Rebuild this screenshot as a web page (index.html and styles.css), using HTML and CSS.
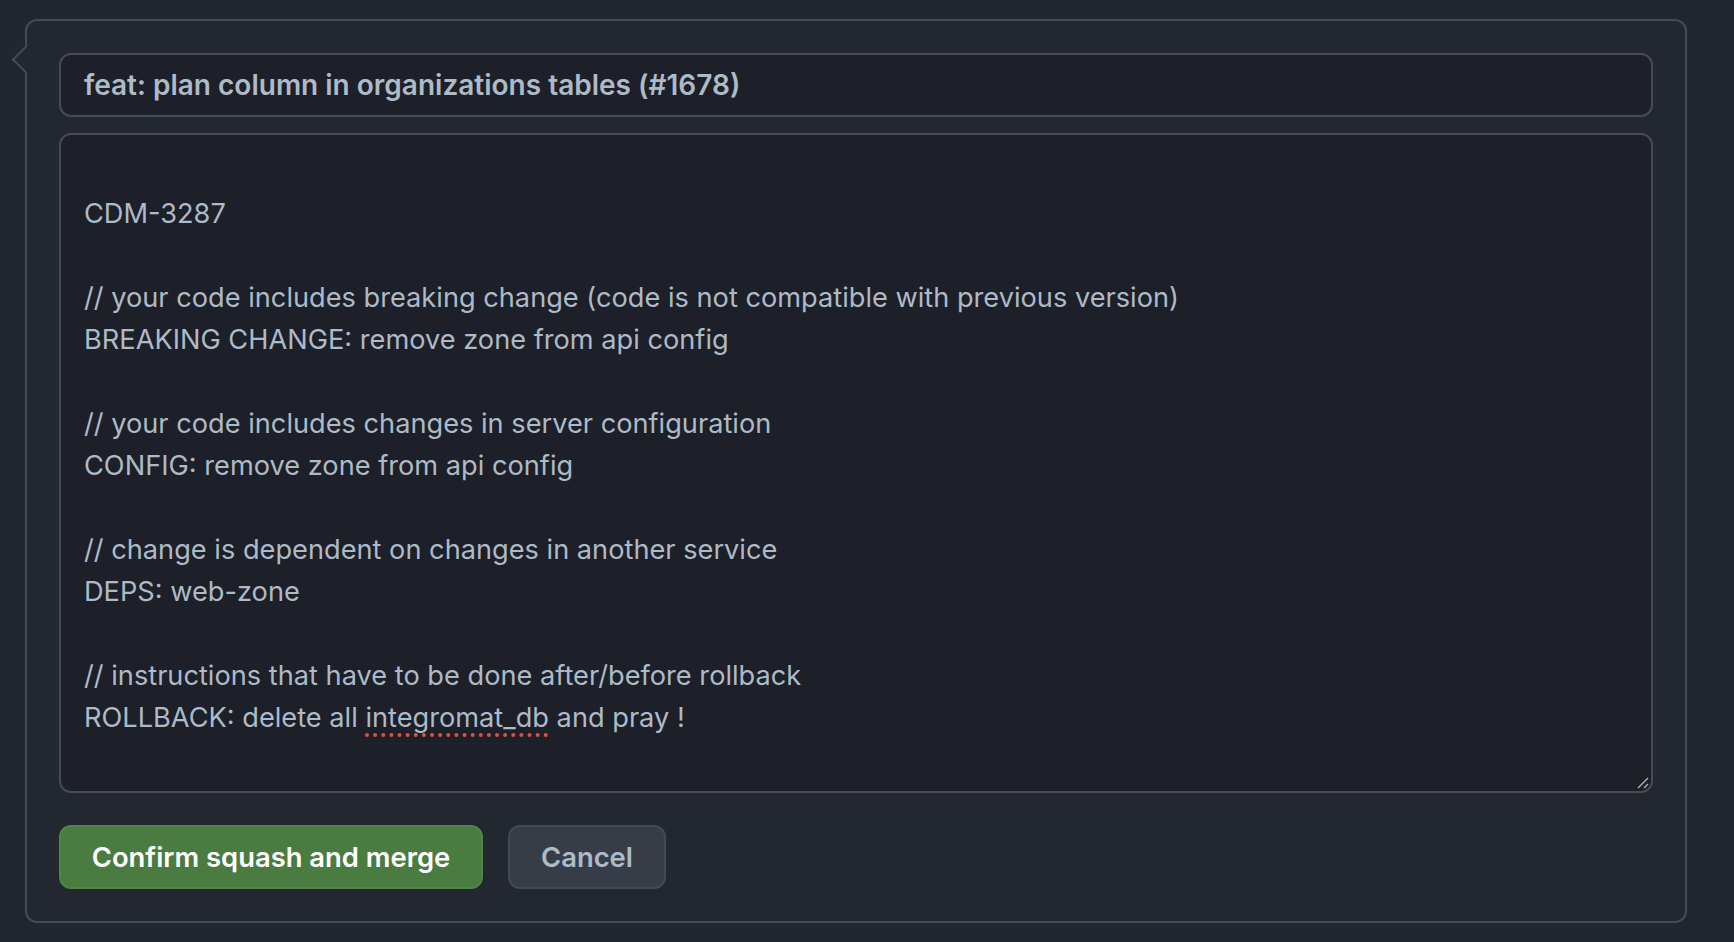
FILE: index.html
```html
<!DOCTYPE html>
<html>
<head>
<meta charset="utf-8">
<link rel="stylesheet" href="styles.css">
</head>
<body>
<div class="page">
  <div class="merge-box">
    <div class="title-input">feat: plan column in organizations tables (#1678)</div>
    <div class="body-input">
      <div class="body-text">&nbsp;
CDM-3287

// your code includes breaking change (code is not compatible with previous version)
BREAKING CHANGE: remove zone from api config

// your code includes changes in server configuration
CONFIG: remove zone from api config

// change is dependent on changes in another service
DEPS: web-zone

// instructions that have to be done after/before rollback
ROLLBACK: delete all <span class="misspelled">integromat_db</span> and pray !</div>
      <svg class="resize-handle" width="14" height="14" viewBox="0 0 14 14">
        <line x1="2" y1="12" x2="12" y2="2" stroke="#1a1a1a" stroke-width="3"/>
        <line x1="2" y1="12" x2="12" y2="2" stroke="#a9a9a9" stroke-width="1.6"/>
        <line x1="8" y1="12" x2="12" y2="8" stroke="#1a1a1a" stroke-width="3"/>
        <line x1="8" y1="12" x2="12" y2="8" stroke="#a9a9a9" stroke-width="1.6"/>
      </svg>
    </div>
    <div class="actions">
      <button class="btn btn-primary">Confirm squash and merge</button>
      <button class="btn btn-secondary">Cancel</button>
    </div>
  </div>
</div>
</body>
</html>
```

FILE: styles.css
```css
html, body {
  margin: 0;
  padding: 0;
  background: #22262e;
  width: 1734px;
  height: 942px;
  overflow: hidden;
}

.page {
  padding: 19px 47px 0 25px;
  font-family: Inter, "Liberation Sans", sans-serif;
  color: #adbac7;
}

.merge-box {
  position: relative;
  box-sizing: border-box;
  width: 1662px;
  height: 904px;
  border: 2px solid #444c56;
  border-radius: 12px;
  background: #23272f;
  padding: 32px 32px;
  display: flex;
  flex-direction: column;
  gap: 16px;
}

.merge-box::before {
  content: "";
  position: absolute;
  left: -11px;
  top: 28px;
  width: 19px;
  height: 19px;
  background: #23272f;
  border-left: 2px solid #444c56;
  border-bottom: 2px solid #444c56;
  transform: rotate(45deg);
}

.title-input {
  box-sizing: border-box;
  height: 64px;
  border: 2px solid #444c56;
  border-radius: 12px;
  background: #1d2028;
  padding: 0 23px;
  display: flex;
  align-items: center;
  font-size: 28px;
  font-weight: 600;
  color: #adbac7;
}

.body-input {
  position: relative;
  box-sizing: border-box;
  height: 660px;
  border: 2px solid #444c56;
  border-radius: 12px;
  background: #1d2028;
  padding: 16px 23px;
}

.body-text {
  white-space: pre-wrap;
  font-size: 27.2px;
  line-height: 42px;
  color: #adbac7;
}

.misspelled {
  text-decoration: underline dotted #d9533f;
  text-decoration-thickness: 4px;
  text-underline-offset: 6px;
}

.resize-handle {
  position: absolute;
  right: 1px;
  bottom: 1px;
}

.actions {
  margin-top: 16px;
  display: flex;
  gap: 25px;
}

.btn {
  box-sizing: border-box;
  height: 64px;
  border-radius: 12px;
  padding: 0;
  font-family: Inter, "Liberation Sans", sans-serif;
  font-size: 27.4px;
  font-weight: 600;
  cursor: pointer;
}

.btn-primary {
  width: 424px;
  background: #4a7b41;
  border: 2px solid #518547;
  color: #ffffff;
}

.btn-secondary {
  width: 158px;
  background: #373d47;
  border: 2px solid #434a54;
  color: #adbac7;
}
```
